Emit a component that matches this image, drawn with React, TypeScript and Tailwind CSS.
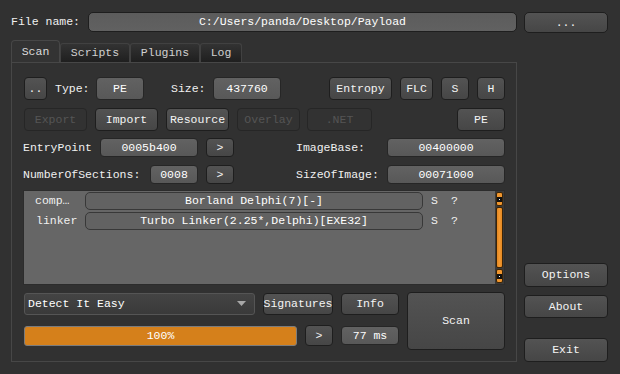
import React from "react";

const btn =
  "flex items-center justify-center rounded-[4px] border border-[#1e1e1e] bg-linear-to-b from-[#535353] to-[#464646] text-[#f4f4f4]";
const off =
  "flex items-center justify-center rounded-[4px] border border-[#262626] bg-[#323232] text-[#555555]";
const field =
  "flex items-center justify-center rounded-[4px] border border-[#262626] bg-linear-to-b from-[#626262] to-[#585858] text-white";

function ScrollDot() {
  return (
    <div className="w-[5px] h-[5px] bg-[#111] flex items-center justify-center">
      <div className="w-[1px] h-[1px] bg-white" />
    </div>
  );
}

export default function App() {
  return (
    <div className="w-[620px] h-[374px] bg-[#313131] flex gap-[7px] pl-[11px] pt-[12px] pb-[12px] font-['Liberation_Mono',monospace] text-[11.5px] text-[#f0f0f0] leading-none">
      {/* Left column */}
      <div className="w-[506px] flex flex-col">
        {/* File name row */}
        <div className="flex items-center h-[20px]">
          <span className="w-[77px]">File name:</span>
          <div className="flex-1 h-[20px] flex items-center justify-center rounded-[5px] border border-[#1e1e1e] bg-linear-to-b from-[#5c5c5c] to-[#616161] text-white">
            C:/Users/panda/Desktop/Payload
          </div>
        </div>

        {/* Tabs */}
        <div className="mt-[8px] flex items-end h-[22px]">
          <div className="w-[49px] h-[22px] flex items-center justify-center rounded-t-[4px] border border-b-0 border-[#474747] bg-[#333333] text-[#dcdcdc]">
            Scan
          </div>
          <div className="w-[70px] h-[19px] flex items-center justify-center rounded-t-[3px] border border-b-0 border-[#414141] bg-linear-to-b from-[#333333] to-[#1f1f1f] text-[#d0d0d0]">
            Scripts
          </div>
          <div className="w-[70px] h-[19px] flex items-center justify-center rounded-t-[3px] border border-b-0 border-[#414141] bg-linear-to-b from-[#333333] to-[#1f1f1f] text-[#d0d0d0]">
            Plugins
          </div>
          <div className="w-[42px] h-[19px] flex items-center justify-center rounded-t-[3px] border border-b-0 border-[#414141] bg-linear-to-b from-[#333333] to-[#1f1f1f] text-[#d0d0d0]">
            Log
          </div>
        </div>

        {/* Tab pane */}
        <div className="h-[300px] border border-[#474747] flex flex-col pl-[12px] pr-[11px] pt-[14px]">
          {/* Row 1 */}
          <div className="flex items-center h-[23px]">
            <div className={`${btn} w-[23px] h-[23px]`}>..</div>
            <span className="ml-[8px] w-[41px]">Type:</span>
            <div className={`${field} w-[48px] h-[23px]`}>PE</div>
            <span className="ml-[27px] w-[42px]">Size:</span>
            <div className={`${field} w-[68px] h-[23px]`}>437760</div>
            <div className={`${btn} ml-auto w-[63px] h-[23px]`}>Entropy</div>
            <div className={`${btn} ml-2 w-[33px] h-[23px]`}>FLC</div>
            <div className={`${btn} ml-2 w-[28px] h-[23px]`}>S</div>
            <div className={`${btn} ml-2 w-[28px] h-[23px]`}>H</div>
          </div>

          {/* Row 2 */}
          <div className="flex items-center h-[23px] mt-[8px]">
            <div className={`${off} w-[63px] h-[23px]`}>Export</div>
            <div className={`${btn} ml-2 w-[63px] h-[23px]`}>Import</div>
            <div className={`${btn} ml-2 w-[63px] h-[23px]`}>Resource</div>
            <div className={`${off} ml-2 w-[63px] h-[23px]`}>Overlay</div>
            <div className={`${off} ml-[7px] w-[65px] h-[23px]`}>.NET</div>
            <div className={`${btn} ml-auto w-[48px] h-[23px]`}>PE</div>
          </div>

          {/* Row 3 */}
          <div className="flex items-center h-[19px] mt-[7px]">
            <span className="w-[76px] -ml-px">EntryPoint</span>
            <div className={`${field} w-[98px] h-[19px] ml-px`}>0005b400</div>
            <div className={`${btn} ml-2 w-[28px] h-[19px]`}>&gt;</div>
            <span className="ml-[62px] flex-1">ImageBase:</span>
            <div className={`${field} w-[118px] h-[19px]`}>00400000</div>
          </div>

          {/* Row 4 */}
          <div className="flex items-center h-[19px] mt-[8px]">
            <span className="w-[126px] -ml-px">NumberOfSections:</span>
            <div className={`${field} w-[48px] h-[19px] ml-px`}>0008</div>
            <div className={`${btn} ml-2 w-[28px] h-[19px]`}>&gt;</div>
            <span className="ml-[62px] flex-1">SizeOfImage:</span>
            <div className={`${field} w-[118px] h-[19px]`}>00071000</div>
          </div>

          {/* Detections list */}
          <div className="mt-[6px] -ml-px h-[95px] flex border border-[#2c2c2c] bg-[#666666]">
            <div className="flex-1 flex flex-col pt-[1px] pl-[11px]">
              <div className="flex items-center h-[18px]">
                <span className="w-[50px]">comp…</span>
                <div className="w-[338px] h-[18px] flex items-center justify-center rounded-[5px] border border-[#383838] bg-[#626262] text-white">
                  Borland Delphi(7)[-]
                </div>
                <span className="ml-[8px]">S</span>
                <span className="ml-[13px]">?</span>
              </div>
              <div className="flex items-center h-[18px] mt-[2px]">
                <span className="w-[50px] pl-px">linker</span>
                <div className="w-[338px] h-[18px] flex items-center justify-center rounded-[5px] border border-[#383838] bg-[#626262] text-white">
                  Turbo Linker(2.25*,Delphi)[EXE32]
                </div>
                <span className="ml-[8px]">S</span>
                <span className="ml-[13px]">?</span>
              </div>
            </div>
            {/* Scrollbar */}
            <div className="w-[9px] flex flex-col bg-[#3a3a3a] px-px py-px gap-[1px]">
              <div className="h-[14px] rounded-[2px] border border-[#3a2408] bg-[#f0962e] flex items-center justify-center">
                <ScrollDot />
              </div>
              <div className="flex-1 rounded-[2px] border border-[#3a2408] bg-linear-to-r from-[#e48822] via-[#f49a32] to-[#e48822]" />
              <div className="h-[14px] rounded-[2px] border border-[#3a2408] bg-[#f0962e] flex items-center justify-center">
                <ScrollDot />
              </div>
            </div>
          </div>

          {/* Bottom block */}
          <div className="mt-[7px] flex">
            <div className="w-[375px] flex flex-col">
              <div className="mt-[1px] flex items-center h-[22px]">
                <div className="w-[231px] h-[22px] flex items-center justify-between pl-[3px] pr-[8px] rounded-[3px] border border-[#555555] bg-linear-to-b from-[#444444] to-[#3a3a3a] text-white">
                  <span>Detect It Easy</span>
                  <svg width="9" height="6" viewBox="0 0 9 6">
                    <path d="M0 0 H9 L4.5 5 Z" fill="#a8a8a8" />
                  </svg>
                </div>
                <div className={`${btn} ml-2 w-[70px] h-[22px]`}>Signatures</div>
                <div className={`${btn} ml-2 w-[58px] h-[22px]`}>Info</div>
              </div>
              <div className="mt-[10px] flex items-center h-[21px]">
                <div className="w-[273px] h-[20px] rounded-[3px] border border-[#7c7c7c] bg-[#d5801b] flex items-center justify-center text-white">
                  100%
                </div>
                <div className={`${btn} ml-2 w-[28px] h-[21px]`}>&gt;</div>
                <div className={`${field} ml-2 w-[58px] h-[19px]`}>77 ms</div>
              </div>
            </div>
            <div className={`${btn} ml-2 w-[98px] h-[58px]`}>Scan</div>
          </div>
        </div>
      </div>

      {/* Right column */}
      <div className="w-[84px] flex flex-col">
        <div className={`${btn} h-[21px] rounded-[5px] text-[#dcdcdc]`}>...</div>
        <div className={`${btn} mt-auto h-[24px]`}>Options</div>
        <div className={`${btn} mt-[8px] h-[23px]`}>About</div>
        <div className={`${btn} mt-[20px] h-[24px]`}>Exit</div>
      </div>
    </div>
  );
}
